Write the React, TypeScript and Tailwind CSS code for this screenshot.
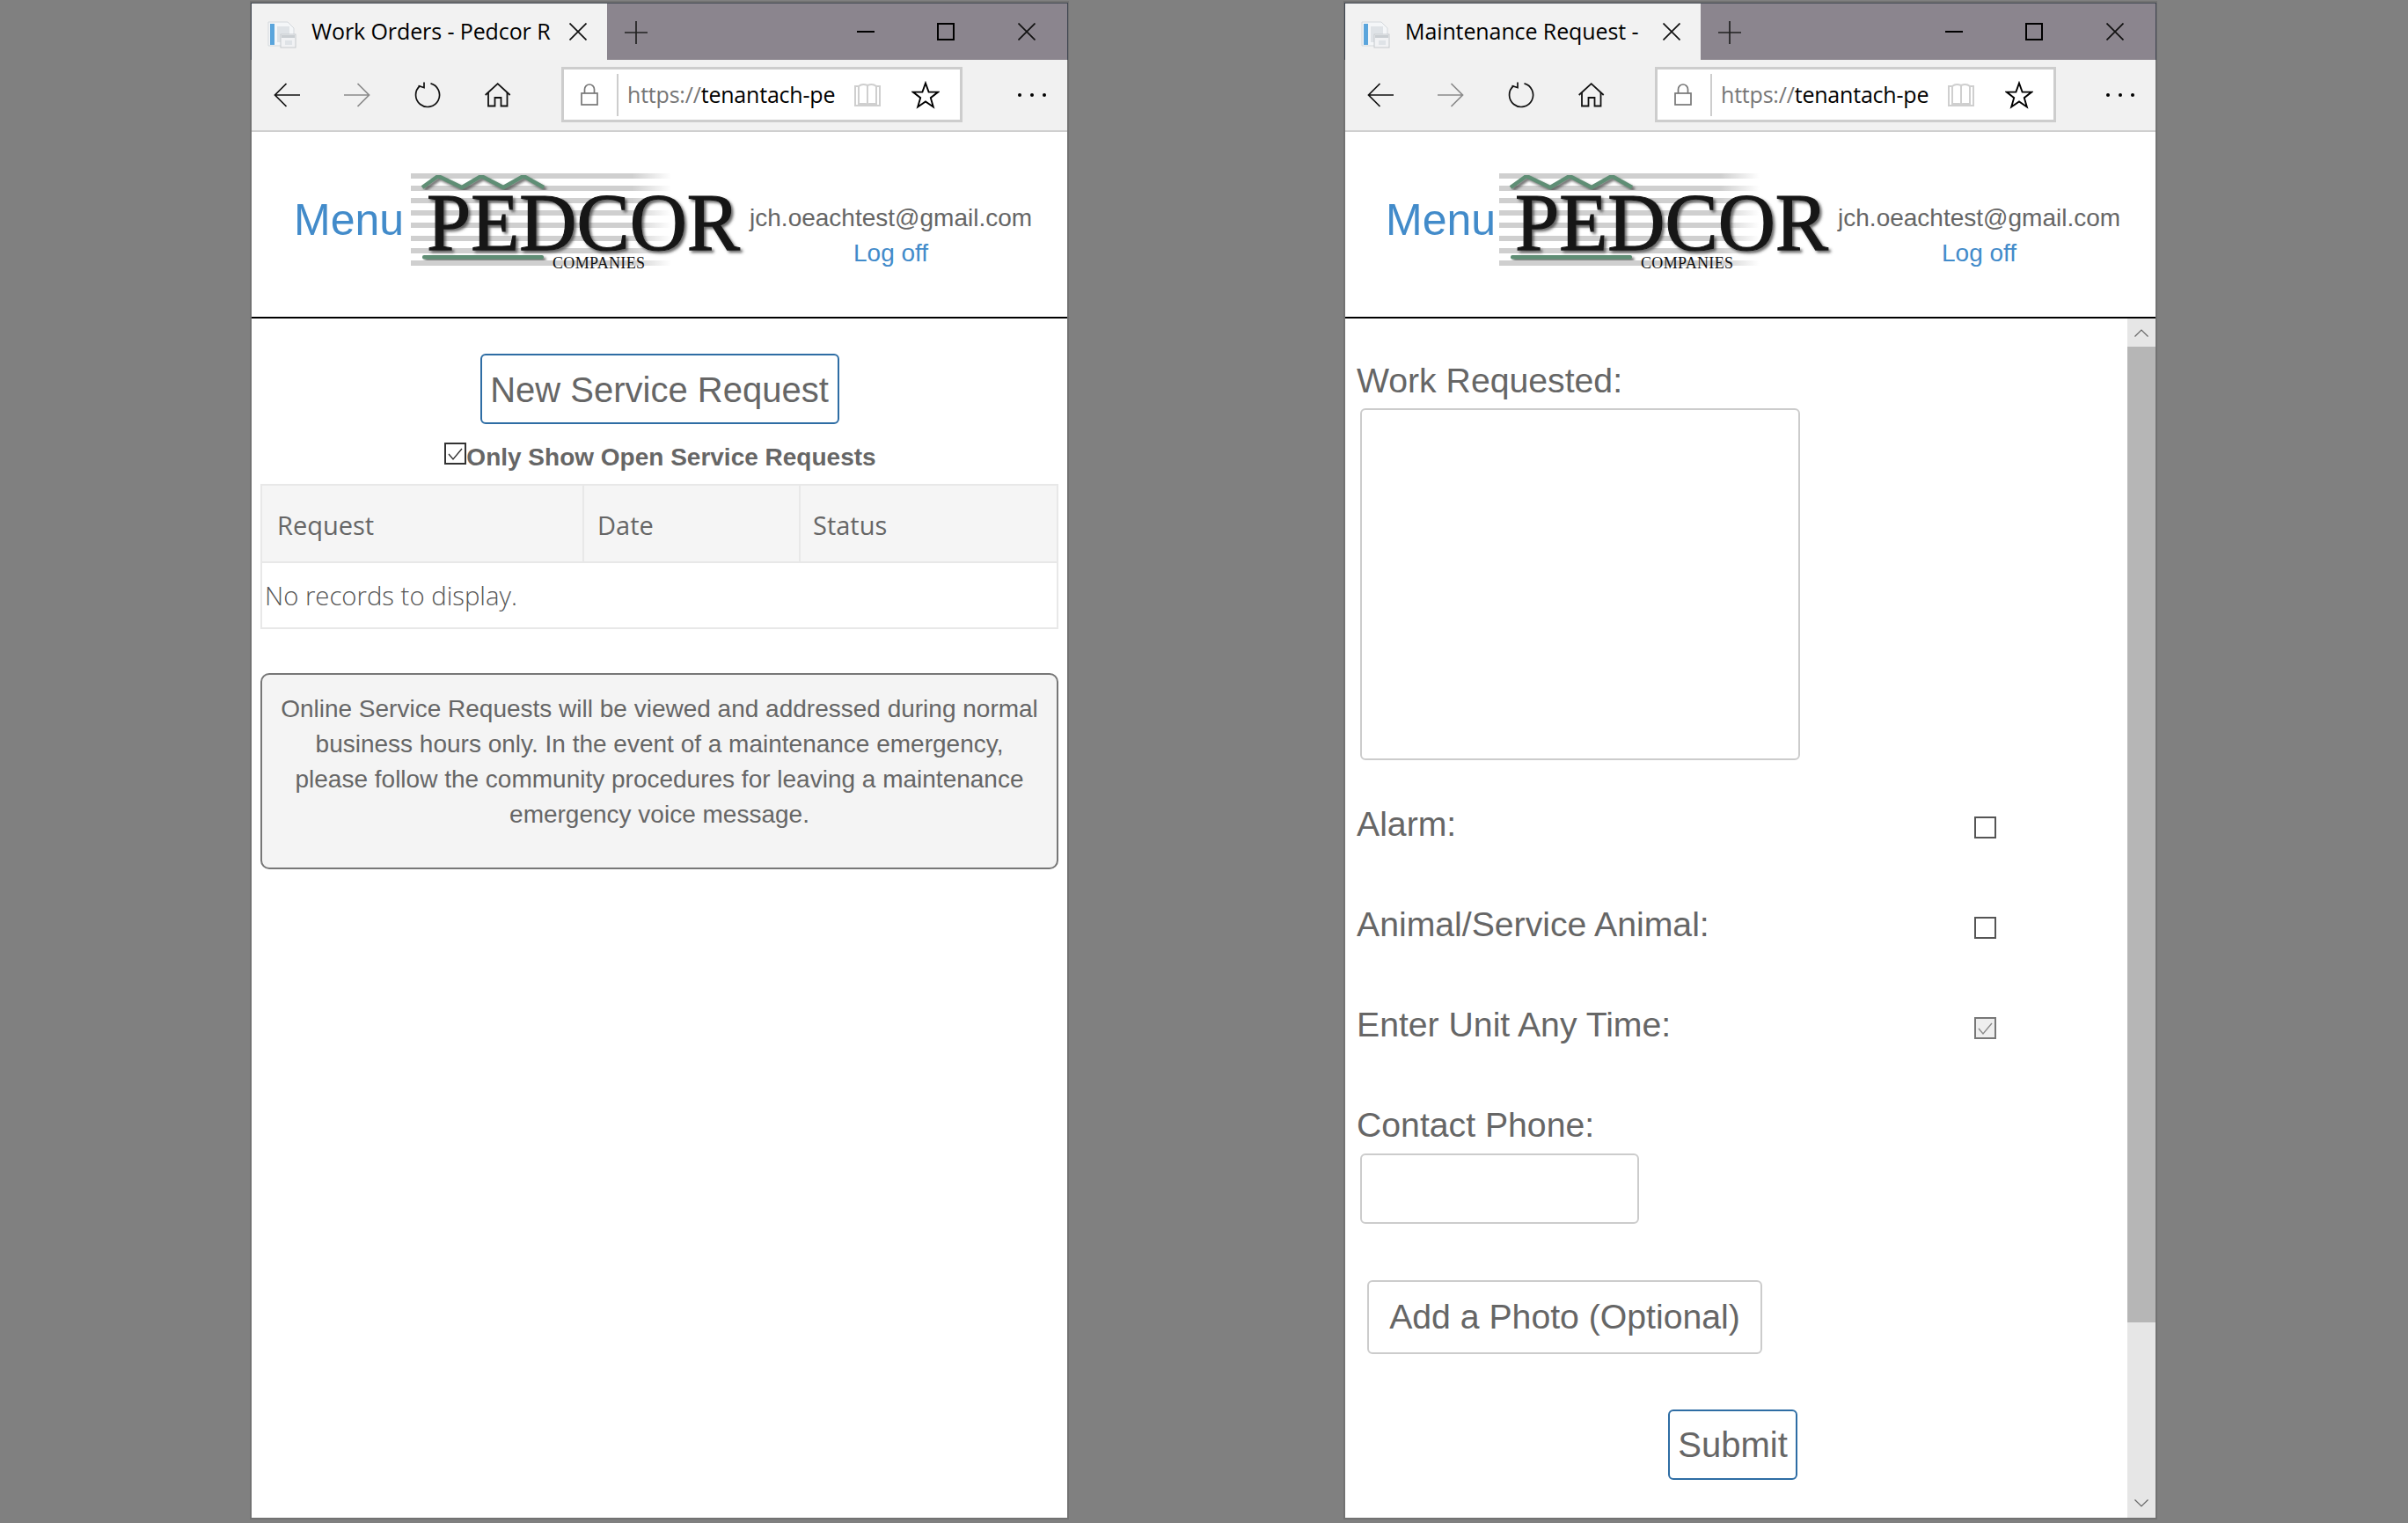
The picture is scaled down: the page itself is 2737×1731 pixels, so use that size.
// Two Edge windows side by side showing the Pedcor tenant portal

import type { ReactNode } from 'react'

const SEGOE = "font-['Open_Sans',sans-serif]"

function Favicon() {
  return (
    <svg width="33" height="32" viewBox="0 0 33 32" fill="none">
      <path d="M1 2h22l7 7v20H1z" fill="#f4f6f8" stroke="#d4d8dc" />
      <rect x="3" y="4" width="5" height="24" fill="#5aa5dc" />
      <rect x="11" y="7" width="14" height="18" fill="#dfe3e7" />
      <rect x="15" y="16" width="17" height="15" fill="#f1f2f4" stroke="#c6cacd" />
      <rect x="16" y="17" width="15" height="3" fill="#c9ced2" />
      <rect x="20" y="23" width="8" height="5" fill="#dfe3e7" />
    </svg>
  )
}

function CloseIcon({ size = 20 }: { size?: number }) {
  return (
    <svg width={size} height={size} viewBox="0 0 20 20" fill="none" stroke="#111" strokeWidth="1.7">
      <path d="M0.5 0.5 19.5 19.5M19.5 0.5 0.5 19.5" />
    </svg>
  )
}

function Arrow({ color, flip }: { color: string; flip?: boolean }) {
  return (
    <svg width="30" height="28" viewBox="0 0 30 28" fill="none" stroke={color} strokeWidth="1.7" className={flip ? 'scale-x-[-1]' : ''}>
      <path d="M30 14H1.5M14.5 1 1.5 14l13 13" />
    </svg>
  )
}

function RefreshIcon() {
  return (
    <svg width="30" height="30" viewBox="0 0 30 30" fill="none" stroke="#111" strokeWidth="1.7">
      <path d="M18.5 1.9A13.5 13.5 0 1 1 6.5 4.5" />
      <path d="M11 0.5V6.5L4.5 4.5" />
    </svg>
  )
}

function HomeIcon() {
  return (
    <svg width="30" height="28" viewBox="0 0 30 28" fill="none" stroke="#111" strokeWidth="1.8">
      <path d="M0.7 14 14.7 1.2 28.7 14" />
      <path d="M4 11V26.5H11.5V17H18.5V26.5H25.5V11" />
    </svg>
  )
}

function LockIcon() {
  return (
    <svg width="20" height="25" viewBox="0 0 20 25" fill="none" stroke="#777" strokeWidth="1.7">
      <rect x="1" y="11" width="18" height="13" />
      <path d="M4.5 11V6.5a5.5 5.5 0 0 1 11 0V11" />
    </svg>
  )
}

function ReadingIcon() {
  return (
    <svg width="30" height="27" viewBox="0 0 30 27" fill="none" stroke="#cfcfcf" strokeWidth="2">
      <path d="M1 4H5V24H13L15 25.5 17 24H25V4H29V26H1z" />
      <path d="M5 4Q9 0.5 15 3V24M25 4Q21 0.5 15 3" />
    </svg>
  )
}

function StarIcon() {
  return (
    <svg width="32" height="32" viewBox="0 0 32 32" fill="none" stroke="#000" strokeWidth="1.9" strokeLinejoin="miter">
      <path d="M16 2.5 19.6 12.6H30.2L21.8 19.2 24.8 29.5 16 23.4 7.2 29.5 10.2 19.2 1.8 12.6H12.4z" />
    </svg>
  )
}

function PedcorLogo() {
  return (
    <svg width="380" height="122" viewBox="0 0 380 122" className="overflow-visible">
      <defs>
        <linearGradient id="stripeFade" x1="0" x2="1" y1="0" y2="0">
          <stop offset="0.85" stopColor="#cfcfcf" />
          <stop offset="1" stopColor="#cfcfcf" stopOpacity="0" />
        </linearGradient>
        <filter id="logoShadow" x="-5%" y="-5%" width="115%" height="125%">
          <feDropShadow dx="2.5" dy="2.5" stdDeviation="1.6" floodColor="#444" floodOpacity="0.8" />
        </filter>
      </defs>
      {[7, 21, 35, 49, 63, 78, 92, 106].map((y) => (
        <rect key={y} x="0" y={y} width="296" height="6" fill="url(#stripeFade)" />
      ))}
      <polyline
        points="13,23 31,10 58,23 80,10 105,23 128,10 151,23"
        fill="none"
        stroke="#5f8e74"
        strokeWidth="4.5"
        filter="url(#logoShadow)"
      />
      <rect x="13" y="100" width="138" height="4.5" rx="2" fill="#5f8e74" filter="url(#logoShadow)" />
      <text
        x="18"
        y="94"
        fontFamily="'Liberation Serif', serif"
        fontSize="93"
        textLength="356"
        lengthAdjust="spacingAndGlyphs"
        fill="#141414"
        stroke="#141414"
        strokeWidth="1.2"
        filter="url(#logoShadow)"
      >
        PEDCOR
      </text>
      <text x="161" y="115" fontFamily="'Liberation Serif', serif" fontSize="18" textLength="105" fill="#111">
        COMPANIES
      </text>
    </svg>
  )
}

// ─── BrowserWindow ──────────────────────────────────────────────

function BrowserWindow({
  title,
  widthClass,
  menuClass,
  children,
}: {
  title: string
  widthClass: string
  menuClass: string
  children: ReactNode
}) {
  return (
    <div className={`${widthClass} h-[1722px] flex flex-col bg-white shadow-[0_0_0_2px_#727272]`}>
      {/* Title bar */}
      <div className="h-[65px] flex bg-[#8b858e] border-t border-[#454b54] shadow-[-1px_0_0_#3f4650,1px_0_0_#3f4650]">
        <div className="w-[404px] flex items-center bg-[#f2f2f2]">
          <div className="ml-[18px] mt-[6px] flex">
            <Favicon />
          </div>
          <span className={`${SEGOE} ml-[17px] w-[273px] text-[25px] tracking-[-0.1px] whitespace-nowrap overflow-hidden text-black`}>
            {title}
          </span>
          <div className="ml-[20px] flex">
            <CloseIcon />
          </div>
        </div>
        <svg width="26" height="26" viewBox="0 0 26 26" stroke="#222" strokeWidth="1.7" className="ml-[20px] mt-[20px]">
          <path d="M13 0V26M0 13H26" />
        </svg>
        <div className="ml-auto flex items-center">
          <div className="w-[91px] flex justify-center">
            <div className="w-[20px] h-[2px] bg-black" />
          </div>
          <div className="w-[91px] flex justify-center">
            <div className="w-[20px] h-[20px] border-2 border-black" />
          </div>
          <div className="w-[93px] flex justify-center">
            <CloseIcon />
          </div>
        </div>
      </div>

      {/* Toolbar */}
      <div className="h-[82px] flex items-start bg-[#f1f1f1] border-b-2 border-[#cfcfcf]">
        <div className="h-[80px] flex items-center">
          <div className="w-[80px] flex justify-center"><Arrow color="#111" /></div>
          <div className="w-[80px] flex justify-center"><Arrow color="#8a8a8a" flip /></div>
          <div className="w-[80px] flex justify-center"><RefreshIcon /></div>
          <div className="w-[80px] flex justify-center"><HomeIcon /></div>
        </div>
        <div className="ml-[32px] mt-[8px] w-[456px] h-[63px] flex items-center bg-white border-[3px] border-[#cdcdcd]">
          <div className="w-[60px] pr-[2px] flex justify-center"><LockIcon /></div>
          <div className="w-[2px] h-[48px] bg-[#cdcdcd]" />
          <span className={`${SEGOE} ml-[10px] w-[240px] text-[25px] tracking-[-0.2px] whitespace-nowrap text-black`}>
            <span className="text-[#767676]">https://</span>tenantach-pe
          </span>
          <div className="ml-[18px] flex"><ReadingIcon /></div>
          <div className="ml-[35px] flex"><StarIcon /></div>
        </div>
        <div className="ml-auto w-[80px] h-[80px] flex items-center justify-center gap-[10px]">
          <div className="w-[4px] h-[4px] rounded-full bg-black" />
          <div className="w-[4px] h-[4px] rounded-full bg-black" />
          <div className="w-[4px] h-[4px] rounded-full bg-black" />
        </div>
      </div>

      {/* Site header */}
      <div className="h-[212px] flex items-start border-b-2 border-black">
        <a className={`${menuClass} mt-[65px] text-[50px] leading-[70px] text-[#428bca]`}>Menu</a>
        <div className="mt-[40px] w-[385px] flex">
          <PedcorLogo />
        </div>
        <div className="mt-[78px] flex flex-col items-center text-[28px] leading-[40px]">
          <span className="text-[#666666]">jch.oeachtest@gmail.com</span>
          <a className="text-[#428bca]">Log off</a>
        </div>
      </div>

      {children}
    </div>
  )
}

// ─── Work orders window ─────────────────────────────────────────

function WorkOrders() {
  return (
    <div className="flex-1 px-[10px] pt-[40px] text-[#666666]">
      <div className="flex justify-center">
        <button
          type="button"
          className="w-[408px] h-[80px] pt-[2px] bg-white border-2 border-[#2e6da4] rounded-[6px] text-[40px] text-[#666666]"
        >
          New Service Request
        </button>
      </div>
      <div className="mt-[21px] flex justify-center items-start">
        <div className="ml-[2px]">
          <CheckBox box="border-[#333333] bg-white" tick="#333333" />
        </div>
        <span className="-mt-[3px] text-[28px] leading-[40px] font-bold">Only Show Open Service Requests</span>
      </div>
      <table className={`${SEGOE} mt-[10px] w-full border-collapse`}>
        <thead>
          <tr className="h-[88px] bg-[#f5f5f5] text-left text-[29px] font-normal">
            <th className="w-[366px] pl-[17px] pt-[3px] border-2 border-[#e8e8e8] font-normal">Request</th>
            <th className="w-[246px] pl-[15px] pt-[3px] border-2 border-[#e8e8e8] font-normal">Date</th>
            <th className="pl-[14px] pt-[3px] border-2 border-[#e8e8e8] font-normal">Status</th>
          </tr>
        </thead>
        <tbody>
          <tr className="h-[75px]">
            <td colSpan={3} className="pl-[3px] pt-[2px] border-2 border-[#e8e8e8] text-[29.3px] font-light text-[#555555]">
              No records to display.
            </td>
          </tr>
        </tbody>
      </table>
      <div className="mt-[50px] h-[223px] pt-[19px] px-[18px] bg-[#f4f4f4] border-2 border-[#777777] rounded-[10px] text-center text-[28px] leading-[40px]">
        Online Service Requests will be viewed and addressed during normal business hours only. In the event of a
        maintenance emergency, please follow the community procedures for leaving a maintenance emergency voice message.
      </div>
    </div>
  )
}

// ─── Maintenance request window ─────────────────────────────────

function CheckBox({ box, tick }: { box: string; tick?: string }) {
  return (
    <div className={`w-[25px] h-[25px] flex items-center justify-center border-2 ${box}`}>
      {tick && (
        <svg width="19" height="16" viewBox="0 0 19 16" fill="none" stroke={tick} strokeWidth="1.4">
          <path d="M2 8 7 14 17 2" />
        </svg>
      )}
    </div>
  )
}

function CheckRow({ label, checked }: { label: string; checked?: boolean }) {
  return (
    <div className="h-[114px] flex items-start">
      <span className="w-[702px] -mt-[1px] leading-[55px]">{label}</span>
      <div className="mt-[18px]">
        {checked ? (
          <CheckBox box="border-[#777777] bg-[#eeeeee]" tick="#8a8a8a" />
        ) : (
          <CheckBox box="border-[#555555] bg-white" />
        )}
      </div>
    </div>
  )
}

function MaintenanceRequest() {
  return (
    <div className="flex-1 flex min-h-0">
      <div className="flex-1 pl-[13px] pt-[43px] text-[39.2px] text-[#666666]">
        <div className="leading-[55px]">Work Requested:</div>
        <textarea className="block ml-[4px] mt-[4px] w-[500px] h-[400px] border-2 border-[#cccccc] rounded-[6px] resize-none" />
        <div className="mt-[46px]">
          <CheckRow label="Alarm:" />
          <CheckRow label="Animal/Service Animal:" />
          <CheckRow label="Enter Unit Any Time:" checked />
        </div>
        <div className="-mt-[1px] leading-[55px]">Contact Phone:</div>
        <input
          type="text"
          className="block ml-[4px] mt-[5px] w-[317px] h-[80px] border-2 border-[#cccccc] rounded-[6px]"
        />
        <button
          type="button"
          className="block ml-[12px] mt-[64px] w-[449px] h-[84px] bg-white border-2 border-[#cccccc] rounded-[6px] text-[39.2px] text-[#666666]"
        >
          Add a Photo (Optional)
        </button>
        <button
          type="button"
          className="block ml-[354px] mt-[63px] w-[147px] h-[80px] bg-white border-2 border-[#2e6da4] rounded-[6px] text-[40px] text-[#666666]"
        >
          Submit
        </button>
      </div>

      {/* Scrollbar */}
      <div className="w-[32px] flex flex-col bg-[#e6e6e6]">
        <div className="h-[32px] flex items-center justify-center">
          <svg width="16" height="9" viewBox="0 0 16 9" fill="none" stroke="#666" strokeWidth="1.2">
            <path d="M0.5 8.5 8 1l7.5 7.5" />
          </svg>
        </div>
        <div className="h-[1109px] bg-[#b6b6b6]" />
        <div className="flex-1 flex items-end justify-center pb-[12px]">
          <svg width="16" height="9" viewBox="0 0 16 9" fill="none" stroke="#666" strokeWidth="1.2">
            <path d="M0.5 0.5 8 8l7.5-7.5" />
          </svg>
        </div>
      </div>
    </div>
  )
}

export default function App() {
  return (
    <div className="w-[2737px] h-[1731px] pt-[3px] pl-[286px] flex gap-[316px] bg-[#808080] font-['Liberation_Sans',Arial,sans-serif] overflow-hidden">
      <BrowserWindow title="Work Orders - Pedcor R" widthClass="w-[927px]" menuClass="ml-[48px] mr-[8px]">
        <WorkOrders />
      </BrowserWindow>
      <BrowserWindow title="Maintenance Request -" widthClass="w-[921px]" menuClass="ml-[46px] mr-[4px]">
        <MaintenanceRequest />
      </BrowserWindow>
    </div>
  )
}
